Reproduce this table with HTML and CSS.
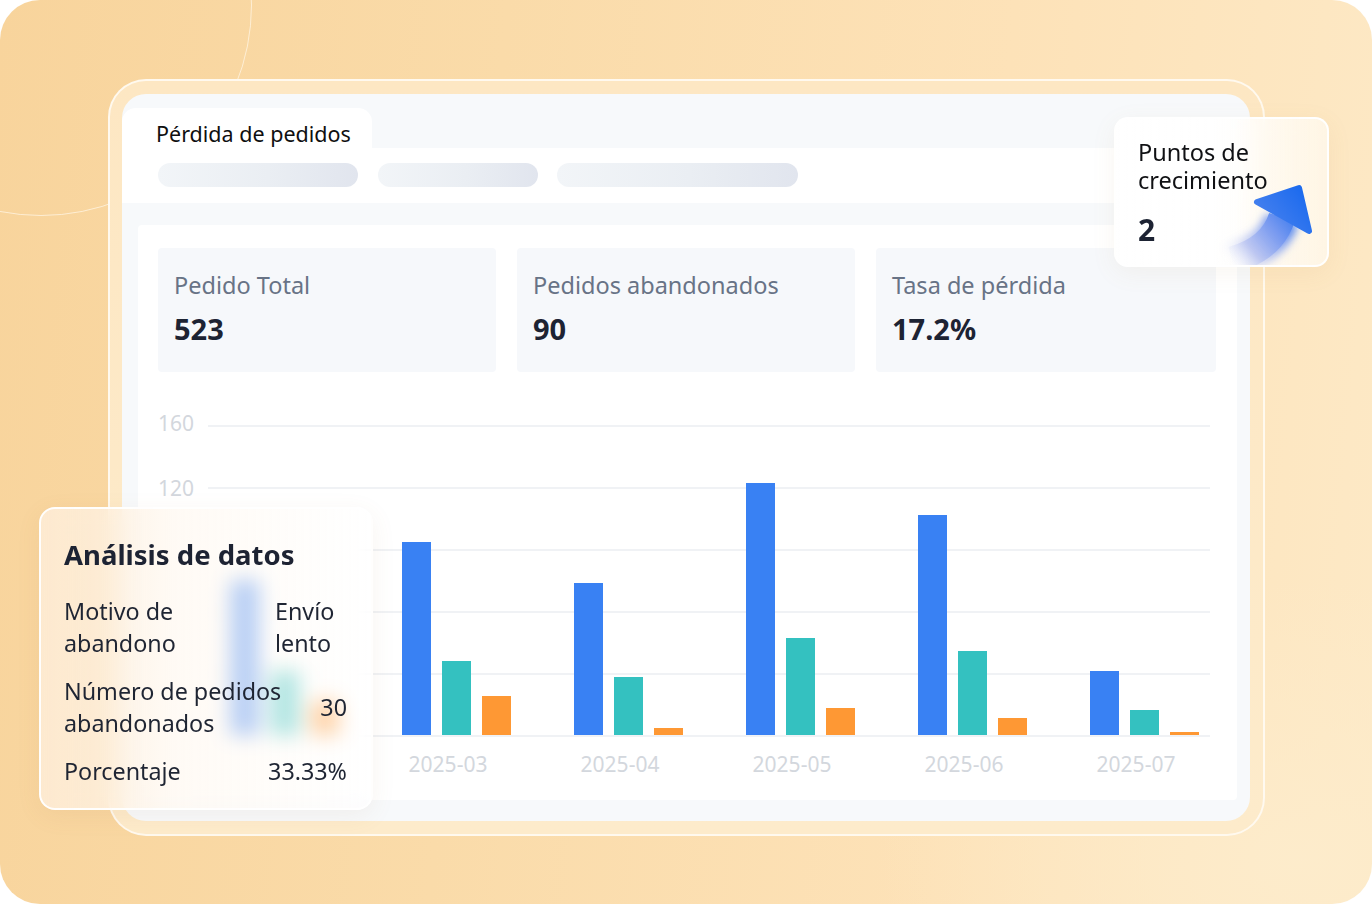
FILE: index.html
```html
<!DOCTYPE html>
<html lang="es">
<head>
<meta charset="utf-8">
<title>Pérdida de pedidos</title>
<link rel="stylesheet" href="styles.css">
</head>
<body>
<div class="canvas">
  <div class="deco-circle"></div>
  <div class="frame">
    <div class="panel">
      <div class="tabs"><div class="tab">Pérdida de pedidos</div></div>
      <div class="toolbar">
        <span class="pill p1"></span>
        <span class="pill p2"></span>
        <span class="pill p3"></span>
      </div>
      <div class="content">
        <div class="stats">
          <div class="stat"><div class="stat-label">Pedido Total</div><div class="stat-value">523</div></div>
          <div class="stat"><div class="stat-label">Pedidos abandonados</div><div class="stat-value">90</div></div>
          <div class="stat"><div class="stat-label">Tasa de pérdida</div><div class="stat-value">17.2%</div></div>
        </div>
        <div class="chart">
          <div class="yaxis">
            <span>160</span><span class="t2">120</span>
          </div>
          <div class="plot">
            <div class="group">
              <div class="bars"><i class="bar blue" style="height:155px"></i><i class="bar teal" style="height:64px"></i><i class="bar orange" style="height:34px"></i></div>
              <div class="xlabel"></div>
            </div>
            <div class="group">
              <div class="bars"><i class="bar blue" style="height:193px"></i><i class="bar teal" style="height:74px"></i><i class="bar orange" style="height:39px"></i></div>
              <div class="xlabel">2025-03</div>
            </div>
            <div class="group">
              <div class="bars"><i class="bar blue" style="height:152px"></i><i class="bar teal" style="height:58px"></i><i class="bar orange" style="height:7px"></i></div>
              <div class="xlabel">2025-04</div>
            </div>
            <div class="group">
              <div class="bars"><i class="bar blue" style="height:252px"></i><i class="bar teal" style="height:97px"></i><i class="bar orange" style="height:27px"></i></div>
              <div class="xlabel">2025-05</div>
            </div>
            <div class="group">
              <div class="bars"><i class="bar blue" style="height:220px"></i><i class="bar teal" style="height:84px"></i><i class="bar orange" style="height:17px"></i></div>
              <div class="xlabel">2025-06</div>
            </div>
            <div class="group">
              <div class="bars"><i class="bar blue" style="height:64px"></i><i class="bar teal" style="height:25px"></i><i class="bar orange" style="height:3px"></i></div>
              <div class="xlabel">2025-07</div>
            </div>
          </div>
        </div>
      </div>
    </div>
  </div>

  <div class="growth-card">
    <div class="growth-title">Puntos de</div>
    <div class="growth-title">crecimiento</div>
    <div class="growth-value">2</div>
    <svg class="growth-arrow" viewBox="0 0 120 110" width="120" height="110" aria-hidden="true">
      <defs>
        <linearGradient id="shaft" x1="20" y1="95" x2="80" y2="45" gradientUnits="userSpaceOnUse">
          <stop offset="0" stop-color="#ffffff" stop-opacity="0"/>
          <stop offset="0.35" stop-color="#b4bff0" stop-opacity="0.65"/>
          <stop offset="0.75" stop-color="#7598f0"/>
          <stop offset="1" stop-color="#4680ee"/>
        </linearGradient>
        <linearGradient id="head" x1="47" y1="60" x2="100" y2="18" gradientUnits="userSpaceOnUse">
          <stop offset="0" stop-color="#4f85ee"/>
          <stop offset="1" stop-color="#1768ee"/>
        </linearGradient>
        <filter id="soft" x="-40%" y="-40%" width="180%" height="180%">
          <feGaussianBlur stdDeviation="4"/>
        </filter>
      </defs>
      <path d="M74 50 Q 64 82 18 92" fill="none" stroke="url(#shaft)" stroke-width="34" filter="url(#soft)"/>
      <path d="M74 48 Q 64 80 24 91" fill="none" stroke="url(#shaft)" stroke-width="27"/>
      <path d="M49 33 L 91 19 L 101 62 Z" fill="url(#head)" stroke="url(#head)" stroke-width="6" stroke-linejoin="round"/>
    </svg>
  </div>

  <div class="analysis-card">
    <div class="analysis-title">Análisis de datos</div>
    <div class="row">
      <div class="row-label l1">Motivo de abandono</div>
      <div class="row-value v1">Envío lento</div>
    </div>
    <div class="row center">
      <div class="row-label l2">Número de pedidos abandonados</div>
      <div class="row-value">30</div>
    </div>
    <div class="row">
      <div class="row-label">Porcentaje</div>
      <div class="row-value">33.33%</div>
    </div>
  </div>
</div>
</body>
</html>
```

FILE: styles.css
```css
html, body {
  margin: 0;
  padding: 0;
  background: #ffffff;
}

body {
  font-family: "Noto Sans", "Open Sans", sans-serif;
  color: #111827;
}

.canvas {
  position: relative;
  width: 1372px;
  height: 904px;
  box-sizing: border-box;
  padding: 79px 0 0 108px;
  border-radius: 40px;
  overflow: hidden;
  background:
    radial-gradient(ellipse 600px 400px at 1300px 860px, rgba(253, 236, 204, 0.9), rgba(253, 236, 204, 0) 70%),
    linear-gradient(95deg, #f8d49c 0%, #fadba9 35%, #fde2b8 70%, #fde9c6 100%);
}

.deco-circle {
  position: absolute;
  left: -170px;
  top: -206px;
  width: 420px;
  height: 420px;
  border-radius: 50%;
  border: 1.5px solid rgba(255, 246, 230, 0.75);
}

.frame {
  position: relative;
  width: 1157px;
  height: 757px;
  box-sizing: border-box;
  padding: 13px 13px 13px 12px;
  border: 2px solid rgba(255, 250, 240, 0.95);
  border-radius: 38px;
  background: linear-gradient(180deg, #fde7c3 0%, #fdebcb 100%);
}

.panel {
  height: 100%;
  display: flex;
  flex-direction: column;
  background: #f7f9fb;
  border-radius: 24px;
  overflow: hidden;
}

.tabs {
  height: 54px;
  box-sizing: border-box;
  padding-top: 14px;
  flex: none;
}

.tab {
  width: 250px;
  height: 40px;
  box-sizing: border-box;
  padding-left: 34px;
  background: #ffffff;
  border-radius: 14px 14px 0 0;
  font-size: 21.5px;
  line-height: 52px;
  color: #0f0f10;
  white-space: nowrap;
}

.toolbar {
  height: 55px;
  box-sizing: border-box;
  padding: 15px 36px 0;
  background: #ffffff;
  display: flex;
  gap: 20px;
  flex: none;
}

.pill {
  display: block;
  height: 24px;
  border-radius: 12px;
  background: linear-gradient(90deg, #f2f5f8 0%, #eaeef3 55%, #e1e5ee 100%);
}

.p1 { width: 200px; }
.p2 { width: 160px; }
.p3 { width: 241px; margin-left: -1px; }

.content {
  flex: 1;
  margin: 22px 13px 21px 16px;
  background: #ffffff;
  box-sizing: border-box;
  padding: 23px 21px 0 20px;
  border-radius: 4px;
}

.stats {
  display: grid;
  grid-template-columns: 338px 338px 340px;
  column-gap: 21px;
}

.stat {
  height: 124px;
  box-sizing: border-box;
  padding: 22px 16px 0;
  background: #f6f8fb;
  border-radius: 4px;
}

.stat-label {
  font-size: 23.5px;
  line-height: 30px;
  color: #687386;
  white-space: nowrap;
}

.stat-value {
  margin-top: 11px;
  font-size: 29px;
  line-height: 36px;
  font-weight: 700;
  color: #1d2333;
}

.chart {
  display: flex;
  margin-top: 53px;
}

.yaxis {
  width: 32px;
  margin-top: -12px;
  display: flex;
  flex-direction: column;
  flex: none;
}

.yaxis span {
  font-size: 21px;
  line-height: 20px;
  color: #d3d7dd;
  white-space: nowrap;
}

.yaxis .t2 {
  margin-top: 45px;
}

.plot {
  display: flex;
  background-image: repeating-linear-gradient(to bottom, #f0f2f5 0 2px, transparent 2px 62px);
  background-size: 1002px 312px;
  background-position: 18px 0;
  background-repeat: no-repeat;
}

.group {
  width: 172px;
  display: flex;
  flex-direction: column;
}

.bars {
  height: 310px;
  display: flex;
  align-items: flex-end;
  gap: 11px;
  padding-left: 40px;
}

.bar {
  display: block;
  width: 29px;
}

.bar.blue { background: #3981f3; }
.bar.teal { background: #34c1c0; }
.bar.orange { background: #fe9834; }

.xlabel {
  height: 22px;
  margin-top: 18px;
  text-align: center;
  font-size: 21px;
  line-height: 22px;
  color: #d3d7dd;
}

/* Floating cards */
.growth-card {
  position: absolute;
  left: 1114px;
  top: 117px;
  width: 215px;
  height: 150px;
  box-sizing: border-box;
  padding: 21px 0 0 22px;
  border: 2px solid rgba(255, 255, 255, 0.95);
  border-radius: 14px;
  background: linear-gradient(90deg, rgba(255, 255, 255, 0.97) 0%, rgba(255, 255, 255, 0.92) 45%, rgba(255, 250, 240, 0.75) 100%);
  backdrop-filter: blur(10px);
  box-shadow: 0 6px 24px rgba(180, 140, 80, 0.08);
  overflow: hidden;
}

.growth-title {
  height: 28px;
  font-size: 23.5px;
  line-height: 24px;
  color: #101114;
  position: relative;
  z-index: 1;
  white-space: nowrap;
}

.growth-value {
  margin-top: 16px;
  font-size: 30px;
  line-height: 36px;
  font-weight: 700;
  color: #1d2333;
}

.growth-arrow {
  position: absolute;
  left: 92px;
  top: 50px;
}

.analysis-card {
  position: absolute;
  left: 39px;
  top: 507px;
  width: 334px;
  height: 303px;
  box-sizing: border-box;
  padding: 28px 24px 0 23px;
  border: 2px solid rgba(255, 255, 255, 0.95);
  border-radius: 16px;
  background: linear-gradient(90deg, rgba(253, 235, 212, 0.92) 0%, rgba(255, 248, 240, 0.68) 40%, rgba(255, 255, 255, 0.58) 100%);
  backdrop-filter: blur(10px);
  box-shadow: 0 6px 24px rgba(170, 120, 60, 0.08);
  color: #1f2533;
}

.analysis-title {
  font-size: 27.5px;
  line-height: 36px;
  font-weight: 700;
  color: #1d2333;
  margin-bottom: 22px;
  white-space: nowrap;
}

.row {
  display: flex;
  justify-content: space-between;
  align-items: flex-start;
  font-size: 23.3px;
  line-height: 32px;
  margin-bottom: 16px;
}

.row.center {
  align-items: center;
}

.row-label.l1 { width: 150px; }
.row-label.l2 { width: 232px; }

.row-value {
  text-align: right;
  white-space: nowrap;
}

.row-value.v1 {
  width: 72px;
  text-align: left;
  white-space: normal;
}
```
